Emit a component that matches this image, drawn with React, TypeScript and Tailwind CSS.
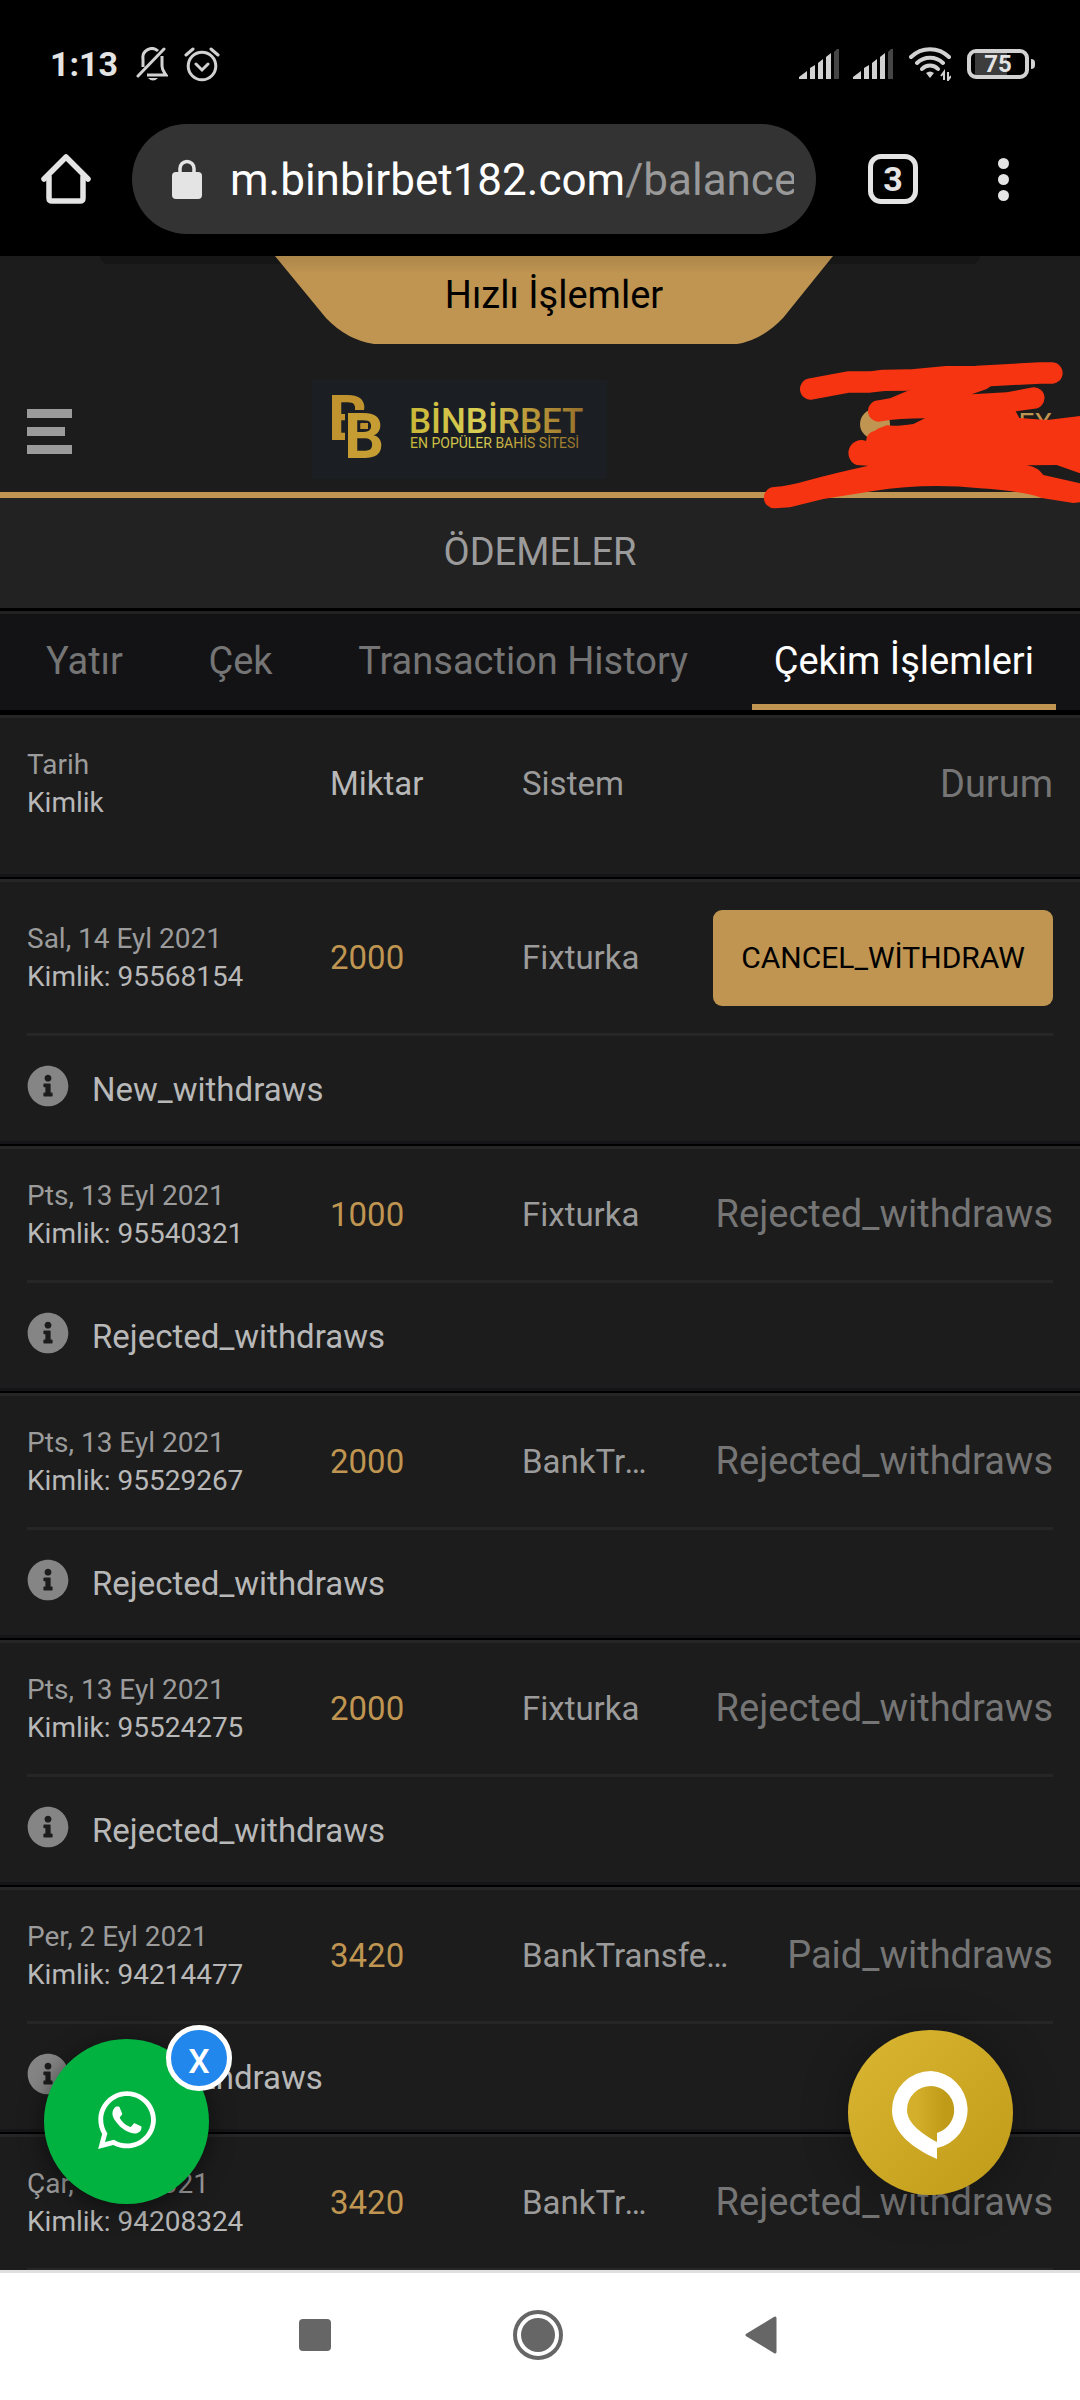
import { FaInfoCircle, FaWhatsapp } from "react-icons/fa";

const withdrawals = [
  { date: "Sal, 14 Eyl 2021", id: "95568154", amount: "2000", system: "Fixturka", status: "New_withdraws", cancellable: true },
  { date: "Pts, 13 Eyl 2021", id: "95540321", amount: "1000", system: "Fixturka", status: "Rejected_withdraws" },
  { date: "Pts, 13 Eyl 2021", id: "95529267", amount: "2000", system: "BankTransfer", status: "Rejected_withdraws" },
  { date: "Pts, 13 Eyl 2021", id: "95524275", amount: "2000", system: "Fixturka", status: "Rejected_withdraws" },
  { date: "Per, 2 Eyl 2021", id: "94214477", amount: "3420", system: "BankTransferFast", status: "Paid_withdraws" },
  { date: "Çar, 1 Eyl 2021", id: "94208324", amount: "3420", system: "BankTransfer", status: "Rejected_withdraws" },
];

const tabs = ["Yatır", "Çek", "Transaction History", "Çekim İşlemleri"];

function SignalIcon() {
  return (
    <svg className="h-[30px] w-10" viewBox="0 0 40 30" fill="#d2d2d2">
      <path d="M0 30v-2l8-6v8zM11 30V19l5-3v14zM19 30V14l5-4v20zM27 30V8l5-4v26z" />
      <path d="M35 30V3l3-3h2v30z" fill="#454545" />
    </svg>
  );
}

function StatusBar() {
  return (
    <div className="flex h-[124px] shrink-0 items-center justify-between pr-[45px] pl-[50px] pt-1">
      <div className="flex items-center">
        <span className="text-[34px] leading-10 font-bold text-[#e4e4e4]">1:13</span>
        <svg className="ml-[18px] h-[34px] w-8" viewBox="0 0 32 34" fill="none" stroke="#d2d2d2" strokeWidth="3">
          <path d="M7 20V12a9 9 0 0 1 15-8M26 9v10c0 4 2 6 4 9H11" />
          <path d="M2 29 28 2" strokeLinecap="round" />
          <path d="M12 31h10q-5 5-10 0z" fill="#d2d2d2" stroke="none" />
        </svg>
        <svg className="ml-4 h-[35px] w-9" viewBox="0 0 36 35" fill="none" stroke="#d2d2d2" strokeWidth="3">
          <circle cx="18" cy="19" r="13.8" />
          <path d="m12 17 6 6 6-6M2 8l7-6M34 8l-7-6" strokeLinecap="round" />
        </svg>
      </div>
      <div className="flex items-center">
        <SignalIcon />
        <span className="ml-[14px] flex">
          <SignalIcon />
        </span>
        <svg className="ml-4 h-[34px] w-[42px]" viewBox="0 0 42 34" fill="none" stroke="#d2d2d2" strokeWidth="4">
          <path d="M2 10a27 27 0 0 1 38 0M8 16a19 19 0 0 1 26 0M13 22a11 11 0 0 1 16 0" strokeLinecap="round" />
          <path d="M17 26q4-3 8 0l-4 5z" fill="#d2d2d2" stroke="none" />
          <path d="M35 33V25l-3 4M39 25v8l3-4" strokeWidth="2" />
        </svg>
        <div className="ml-4 flex h-[30px] w-[62px] items-center justify-center rounded-[9px] border-4 border-[#d2d2d2] bg-[linear-gradient(90deg,#000_4px,#3d3d3d_4px,#3d3d3d_36px,#000_36px)] text-2xl leading-none font-bold text-[#e4e4e4]">
          75
        </div>
        <div className="ml-0.5 h-[10px] w-1 rounded-r bg-[#d2d2d2]" />
      </div>
    </div>
  );
}

function BrowserBar() {
  return (
    <div className="flex h-[132px] shrink-0 items-start pr-[66px] pl-[41px]">
      <button aria-label="Home" className="mt-[30px]">
        <svg className="h-[50px] w-[50px]" viewBox="0 0 50 50" fill="none" stroke="#e4e4e4" strokeWidth="5.5" strokeLinecap="round" strokeLinejoin="round">
          <path d="M8 23v21q0 3 3 3h28q3 0 3-3V23" />
          <path d="M3 25 25 3l22 22" />
        </svg>
      </button>
      <div className="ml-[41px] flex h-[110px] min-w-0 flex-1 items-center rounded-full bg-[#333] pr-[22px] pl-10">
        <svg className="h-10 w-[30px] shrink-0" viewBox="0 0 30 40" fill="#e4e4e4">
          <rect y="13" width="30" height="27" rx="4" />
          <path d="M8 15V9.500a7 7 0 0 1 14 0V15" fill="none" stroke="#e4e4e4" strokeWidth="3.500" />
        </svg>
        <div className="ml-7 overflow-hidden pt-0.5 text-[44px] leading-[56px] whitespace-nowrap text-white">
          m.binbirbet182.com<span className="text-[#999]">/balance</span>
        </div>
      </div>
      <button aria-label="Tabs" className="mt-[30px] ml-[52px] flex h-[50px] w-[50px] items-center justify-center rounded-[13px] border-[5px] border-[#e4e4e4] text-[34px] leading-none font-bold text-[#e4e4e4]">
        3
      </button>
      <button aria-label="Menu" className="mt-[30px] ml-[74px] flex h-[50px] w-[22px] flex-col items-center justify-center gap-[5px]">
        <span className="h-[11px] w-[11px] rounded-full bg-[#e4e4e4]" />
        <span className="h-[11px] w-[11px] rounded-full bg-[#e4e4e4]" />
        <span className="h-[11px] w-[11px] rounded-full bg-[#e4e4e4]" />
      </button>
    </div>
  );
}

function Logo() {
  return (
    <a href="#" className="flex h-[99px] w-[295px] bg-[#1b1f23]">
      <svg className="h-[99px] w-[295px]" viewBox="0 0 295 99" fontFamily="Roboto, sans-serif">
        <defs>
          <linearGradient id="wordmark" x1="0" x2="1">
            <stop offset="0" stopColor="#c9b637" />
            <stop offset="0.4" stopColor="#d9cf55" />
            <stop offset="0.65" stopColor="#bf9f3b" />
            <stop offset="1" stopColor="#96702c" />
          </linearGradient>
        </defs>
        <text x="16" y="60" fontSize="63" fontWeight="700" fill="#c0932f">B</text>
        <text x="32" y="78" fontSize="63" fontWeight="700" fill="#c69d33" stroke="#1b1f23" strokeWidth="6" paintOrder="stroke">B</text>
        <path d="M49 43h7v6h-7z" fill="#c0932f" />
        <text x="97" y="53" fontSize="35" fontWeight="500" fill="url(#wordmark)">BİNBİRBET</text>
        <text x="98" y="68" fontSize="14" fill="url(#wordmark)">EN POPÜLER BAHİS SİTESİ</text>
      </svg>
    </a>
  );
}

function SiteHeader() {
  return (
    <header className="relative border-b-[6px] border-[#bf9551]">
      <div className="relative flex h-[88px] justify-center">
        <div className="absolute top-0 right-[100px] left-[100px] h-2 rounded-b-3xl bg-[#161616]" />
        <button className="relative ml-7 flex h-[88px] w-[558px] items-start justify-center pt-[14px] text-[38px] leading-[50px] text-black">
          <svg className="absolute inset-0 h-full w-full" viewBox="0 0 558 88" preserveAspectRatio="none">
            <defs>
              <linearGradient id="ribbon" x2="0" y2="1">
                <stop offset="0" stopColor="#ab854a" />
                <stop offset="0.2" stopColor="#bf9551" />
              </linearGradient>
            </defs>
            <path d="M0 0h558l-50 62q-21 22-46 26H99Q72 84 51 62z" fill="url(#ribbon)" />
          </svg>
          <span className="relative">Hızlı İşlemler</span>
        </button>
      </div>
      <div className="flex h-[148px] items-center justify-between pt-[24px] pb-[1px] pl-[27px]">
        <button aria-label="Menü" className="flex w-[285px] flex-col gap-[9px] pt-1">
          <span className="h-[9px] w-[45px] bg-[#9b9b9b]" />
          <span className="h-[9px] w-[38px] bg-[#9b9b9b]" />
          <span className="h-[9px] w-[45px] bg-[#9b9b9b]" />
        </button>
        <Logo />
        <div className="flex flex-1 items-center justify-end pr-[28px] pb-3 text-[28px] text-[#bf9551]">
          <span className="h-[30px] w-[30px] rounded-full bg-[#bf9551]" />
          <span className="w-[162px] text-right">EX</span>
        </div>
      </div>
      {/* marker strokes over the account name */}
      <svg className="absolute top-[100px] right-0 h-[160px] w-[330px]" viewBox="450 348 990 480" fill="#f63411">
        <path d="M632 447 745 426h65l40-5 80-1 110-10 90-1 190-10h36" fill="none" stroke="#f63411" strokeWidth="64" strokeLinecap="round" strokeLinejoin="round" />
        <path d="M920 454 870 475 836 481A32 32 0 0 0 836 545Q900 535 975 535L940 552Q890 560 860 556 835 565 825 572 800 577 798 603A34 34 0 0 0 770 675L805 677Q700 700 620 722 570 737 522 741A32 32 0 0 0 525 805L570 802 670 777 820 753Q980 728 1140 745 1280 755 1325 774L1420 789 1440 787V730L1330 705Q1315 682 1280 676L1370 675 1440 700V528L1342 540 1258 534 1247 514 1303 506A32 32 0 0 0 1300 442L1220 457 1115 463 1160 447 1185 430H1000z" />
      </svg>
    </header>
  );
}

export default function App() {
  return (
    <div className="flex h-screen flex-col overflow-hidden bg-black font-[Roboto,sans-serif]">
      <StatusBar />
      <BrowserBar />
      <main className="relative min-h-0 flex-1 overflow-hidden bg-[#1c1c1c]">
        <SiteHeader />
        <h1 className="flex h-[113px] items-center justify-center border-b-[3px] border-black bg-[#222] pb-0.5 text-[38px] leading-none text-[#9b9b9b]">
          ÖDEMELER
        </h1>
        <nav className="flex justify-between border-t-[3px] border-b-[5px] border-t-[#222] border-b-black bg-[#131315] px-6">
          {tabs.map((tab, i) => (
            <button
              key={tab}
              className={`h-24 border-b-[6px] px-[22px] pt-[3px] text-[38px] leading-none ${
                i === 3 ? "border-[#bf9551] text-white" : "border-transparent text-[#757575]"
              }`}
            >
              {tab}
            </button>
          ))}
        </nav>

        <div className="flex h-[162px] items-center border-t-[3px] border-b-[3px] border-t-[#262626] border-b-[#151517] px-[27px] pb-6">
          <div className="w-[303px] text-[28px] leading-[38px]">
            <p className="text-[#9b9b9b]">Tarih</p>
            <p className="text-[#b8b8b8]">Kimlik</p>
          </div>
          <p className="w-[192px] text-[33px] text-[#b8b8b8]">Miktar</p>
          <p className="flex-1 text-[33px] text-[#9b9b9b]">Sistem</p>
          <p className="text-[38px] text-[#757575]">Durum</p>
        </div>

        {withdrawals.map((w) => (
          <section key={w.id} className="border-t-2 border-black">
            <div className="border-t-[3px] border-b-[3px] border-t-[#262626] border-b-[#151517] px-[27px]">
              <div className={`flex items-center border-b-[3px] border-[#262626] ${w.cancellable ? "h-[154px]" : "h-[134px]"}`}>
                <div className="w-[303px] shrink-0 text-[28px] leading-[38px]">
                  <p className="text-[#9b9b9b]">{w.date}</p>
                  <p className="text-[#b8b8b8]">Kimlik: {w.id}</p>
                </div>
                <p className="w-[192px] shrink-0 text-[33px] text-[#bf9551]">{w.amount}</p>
                <p className="mr-[54px] min-w-0 flex-1 truncate text-[33px] text-[#9b9b9b]">{w.system}</p>
                {w.cancellable ? (
                  <button className="h-24 shrink-0 rounded-[9px] bg-[#bf9551] px-7 text-[30px] text-black">CANCEL_WİTHDRAW</button>
                ) : (
                  <p className="shrink-0 text-[38px] text-[#757575]">{w.status}</p>
                )}
              </div>
              <div className="flex h-[105px] items-center pb-0.5">
                <FaInfoCircle className="mb-1 h-[42px] w-[42px] text-[#858585]" />
                <p className="ml-[23px] pt-1 text-[33px] leading-none text-[#b8b8b8]">{w.status}</p>
              </div>
            </div>
          </section>
        ))}

        <button aria-label="WhatsApp" className="absolute bottom-[66px] left-[44px] flex h-[165px] w-[165px] items-center justify-center rounded-full bg-[#02b241] pb-1 shadow-[0_4px_24px_rgba(0,0,0,0.5)]">
          <FaWhatsapp className="h-[66px] w-[66px] text-white" />
        </button>
        <button aria-label="Kapat" className="absolute bottom-[179px] left-[166px] flex h-[66px] w-[66px] items-center justify-center rounded-full border-[5px] border-white bg-[#2287ec] pt-1.5 text-[34px] leading-none font-medium text-white">
          X
        </button>
        <button aria-label="Canlı destek" className="absolute right-[67px] bottom-[75px] flex h-[165px] w-[165px] items-center justify-center rounded-full bg-linear-to-br from-[#dab631] to-[#bf9b18] pt-1 shadow-[0_4px_48px_rgba(0,0,0,0.3)]">
          <svg className="h-[88px] w-[78px]" viewBox="0 0 78 88">
            <defs>
              <linearGradient id="bubble">
                <stop offset="0.2" stopColor="#d3af2b" />
                <stop offset="0.8" stopColor="#bf9b18" />
              </linearGradient>
            </defs>
            <path d="M39 0a39 39 0 0 1 6 77v11C22 78 0 62 0 39A39 39 0 0 1 39 0z" fill="#fff" />
            <path d="M39 15a24 24 0 0 1 6 47v9C32 64 15 53 15 39a24 24 0 0 1 24-24z" fill="url(#bubble)" />
          </svg>
        </button>
      </main>

      <nav className="flex h-[130px] shrink-0 items-center justify-center border-t-[3px] border-[#e0dede] bg-white pr-1 pb-1">
        <button aria-label="Recent apps" className="h-8 w-8 rounded-sm bg-[#666]" />
        <button aria-label="Home screen" className="mx-[182px] h-[50px] w-[50px] rounded-full border-4 border-[#666] p-1">
          <span className="block h-full w-full rounded-full bg-[#666]" />
        </button>
        <button aria-label="Back">
          <svg className="h-[38px] w-8" viewBox="0 0 32 38" fill="#666" stroke="#666" strokeWidth="3" strokeLinejoin="round">
            <path d="M30 2v34L2 19z" />
          </svg>
        </button>
      </nav>
    </div>
  );
}
